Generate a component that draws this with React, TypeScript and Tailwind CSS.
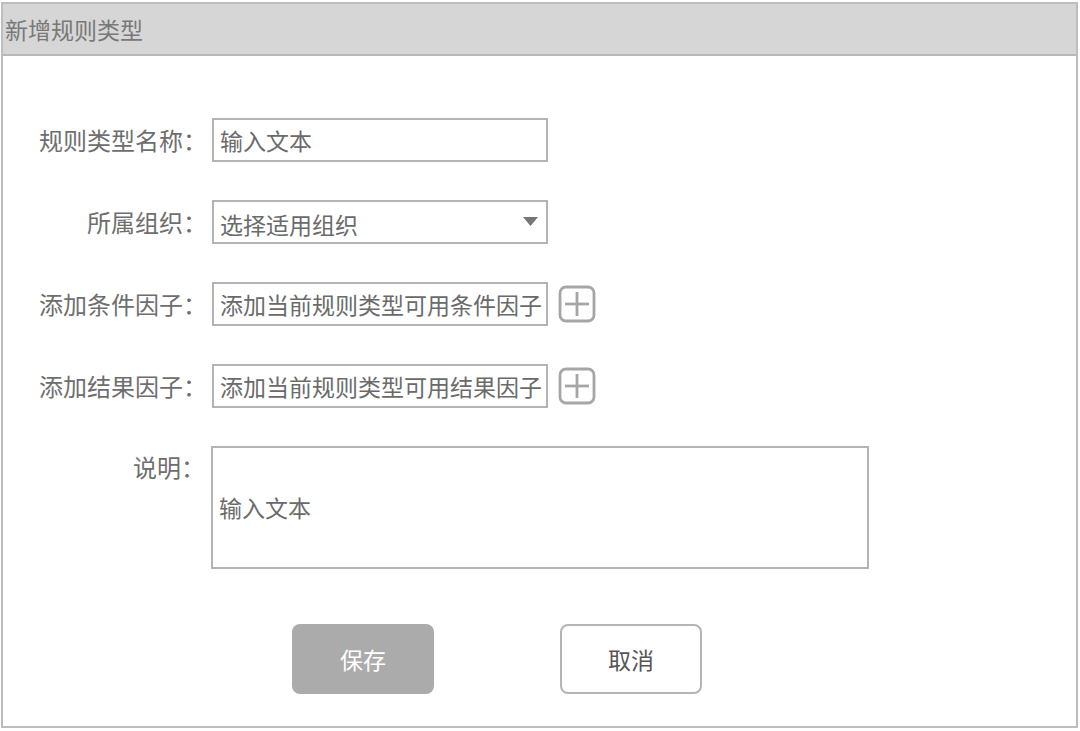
const font = { fontFamily: '"Noto Sans CJK SC", "Noto Sans", sans-serif' };

function PlusBox() {
  return (
    <svg width="38" height="38" viewBox="0 0 38 38" className="shrink-0">
      <rect x="2" y="2" width="34" height="34" rx="6" fill="none" stroke="#a6a6a6" strokeWidth="2.8" />
      <line x1="19" y1="7" x2="19" y2="31" stroke="#a6a6a6" strokeWidth="2.8" />
      <line x1="7" y1="19" x2="31" y2="19" stroke="#a6a6a6" strokeWidth="2.8" />
    </svg>
  );
}

function Label({ text }: { text: string }) {
  return (
    <div className="w-[204px] shrink-0 text-right text-[24px] text-[#6e6e6e] leading-none mr-[5px]">
      {text}
    </div>
  );
}

function Row({ label, children }: { label: string; children: React.ReactNode }) {
  return (
    <div className="flex items-center h-[44px]">
      <Label text={label} />
      {children}
    </div>
  );
}

function TextBox({ text }: { text: string }) {
  return (
    <div className="w-[336px] h-full border-2 border-[#b4b4b4] flex items-center pl-[6px] text-[23px] text-[#6a6a6a] whitespace-nowrap overflow-hidden">
      {text}
    </div>
  );
}

export default function App() {
  return (
    <div className="w-[1080px] h-[731px] bg-white pt-[2px] pl-[1px]" style={font}>
      <div className="w-[1077px] h-[726px] border-2 border-[#bdbdbd] flex flex-col">
        {/* Title bar */}
        <div className="h-[52px] bg-[#d6d6d6] border-b-2 border-[#b8b8b8] flex items-center pl-[2px] text-[23px] text-[#787878]">
          新增规则类型
        </div>

        {/* Form */}
        <div className="flex flex-col gap-[38px] pt-[62px]">
          <Row label="规则类型名称：">
            <TextBox text="输入文本" />
          </Row>

          <Row label="所属组织：">
            <div className="w-[336px] h-full border-2 border-[#b4b4b4] flex items-center justify-between pl-[6px] pr-[8px] text-[23px] text-[#6a6a6a]">
              <span className="pt-[4px]">选择适用组织</span>
              <svg width="15" height="9" viewBox="0 0 15 9" className="mb-[2px]">
                <path d="M0 0 H15 L7.5 9 Z" fill="#777" />
              </svg>
            </div>
          </Row>

          <Row label="添加条件因子：">
            <TextBox text="添加当前规则类型可用条件因子" />
            <div className="ml-[10px]">
              <PlusBox />
            </div>
          </Row>

          <Row label="添加结果因子：">
            <TextBox text="添加当前规则类型可用结果因子" />
            <div className="ml-[10px]">
              <PlusBox />
            </div>
          </Row>

          <div className="flex items-start">
            <div className="w-[208px] shrink-0 text-right text-[24px] text-[#6e6e6e] pt-[3px] pr-[6px]">
              说明：
            </div>
            <div className="w-[658px] h-[123px] border-2 border-[#b4b4b4] flex items-center pl-[6px] text-[23px] text-[#6a6a6a]">
              输入文本
            </div>
          </div>
        </div>

        {/* Actions */}
        <div className="flex pl-[289px] gap-[126px] mt-[55px]">
          <button className="w-[142px] h-[70px] rounded-[8px] bg-[#ababab] text-white text-[23px]">
            保存
          </button>
          <button className="w-[142px] h-[70px] rounded-[8px] border-2 border-[#b4b4b4] bg-white text-[#555] text-[23px]">
            取消
          </button>
        </div>
      </div>
    </div>
  );
}
